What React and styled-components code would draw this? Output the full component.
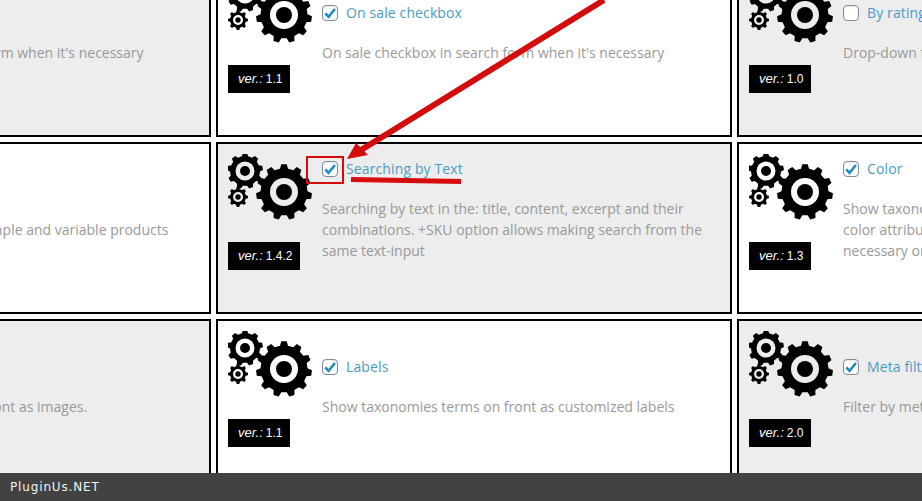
import React from 'react';
import styled, { createGlobalStyle } from 'styled-components';

const GlobalStyle = createGlobalStyle`
  html, body {
    margin: 0;
    height: 100%;
    overflow: hidden;
    background: #fff;
    font-family: "Open Sans", sans-serif;
  }
`;

const Grid = styled.div`
  display: grid;
  grid-template-columns: repeat(3, 516px);
  grid-auto-rows: 172px;
  gap: 5px;
  margin: -35px 0 0 -305px;
  width: 1558px;
`;

const Card = styled.div`
  box-sizing: border-box;
  border: 2px solid #000;
  background: ${props => (props.$active ? '#ededed' : '#fff')};
  padding: 10px;
  display: grid;
  grid-template-columns: 94px 1fr;
  grid-template-rows: 116px;
`;

const Side = styled.div`
  display: flex;
  flex-direction: column;
  align-items: flex-start;
  gap: 22px;
`;

const Version = styled.div`
  background: #000;
  color: #fff;
  font-family: "Liberation Sans", sans-serif;
  font-size: 12px;
  line-height: 28px;
  height: 28px;
  padding: 0 7px 0 10px;
  em {
    font-size: 13px;
    margin-right: 3px;
  }
`;

const Body = styled.div`
  align-self: center;
  padding-bottom: 7px;
`;

const Heading = styled.div`
  display: flex;
  align-items: center;
  gap: 8px;
  height: 24px;
  margin-bottom: 17px;
  font-size: 14px;
  letter-spacing: 0.12px;
  color: #4a9cc2;
`;

const Box = styled.span`
  box-sizing: border-box;
  width: 16px;
  height: 16px;
  border: 1px solid #7e8c9a;
  border-radius: 4px;
  background: #fff;
  display: flex;
  align-items: center;
  justify-content: center;
  box-shadow: inset 0 1px 2px rgba(0, 0, 0, 0.1);
`;

const Text = styled.div`
  font-size: 14px;
  line-height: 21px;
  color: #999;
`;

const Footer = styled.div`
  position: fixed;
  left: 0;
  right: 0;
  bottom: 0;
  height: 28px;
  line-height: 28px;
  padding-left: 10px;
  background: #424242;
  color: #f2f2f2;
  font-family: "DejaVu Sans", sans-serif;
  font-size: 12px;
  letter-spacing: 0.85px;
`;

const Overlay = styled.svg`
  position: fixed;
  left: 0;
  top: 0;
  pointer-events: none;
`;

function gearPath(cx, cy, outer, inner, teeth) {
  let d = '';
  const step = (Math.PI * 2) / teeth;
  for (let i = 0; i < teeth; i++) {
    const a = i * step - Math.PI / 2;
    const pts = [
      [inner, a - step * 0.3],
      [outer, a - step * 0.17],
      [outer, a + step * 0.17],
      [inner, a + step * 0.3],
    ];
    pts.forEach(([r, t], j) => {
      d += `${i === 0 && j === 0 ? 'M' : 'L'}${(cx + r * Math.cos(t)).toFixed(2)} ${(cy + r * Math.sin(t)).toFixed(2)}`;
    });
  }
  return d + 'Z';
}

function Gear({ cx, cy, outer, inner, ring, hole, teeth, bg }) {
  return (
    <g>
      <path d={gearPath(cx, cy, outer, inner, teeth)} fill="#000" />
      <circle cx={cx} cy={cy} r={ring} fill={bg} />
      <circle cx={cx} cy={cy} r={hole} fill="#000" />
    </g>
  );
}

const Gears = ({ bg }) => (
  <svg width="86" height="66" viewBox="0 0 86 66">
    <Gear cx={17} cy={17} outer={18} inner={15} ring={9.5} hole={5} teeth={9} bg={bg} />
    <Gear cx={10} cy={43} outer={10} inner={8} ring={5} hole={2.7} teeth={8} bg={bg} />
    <Gear cx={56} cy={38} outer={28} inner={23.5} ring={14} hole={8} teeth={11} bg={bg} />
  </svg>
);

const Check = () => (
  <svg width="12" height="12" viewBox="0 0 12 12">
    <path d="M1.3 6.3L4.6 9.8L10.9 2" fill="none" stroke="#1e8cbe" strokeWidth="2.6" />
  </svg>
);

const cards = [
  { title: 'Select', text: "Drop-down filters in search form when it's necessary", ver: '1.0', checked: true, active: true },
  { title: 'On sale checkbox', text: "On sale checkbox in search form when it's necessary", ver: '1.1', checked: true },
  { title: 'By rating', text: "Drop-down filter by rating in search form when it's necessary", ver: '1.0', active: true },
  { title: 'Products type', text: 'Filter by the product types: simple and variable products', ver: '1.0', checked: true },
  { title: 'Searching by Text', text: 'Searching by text in the: title, content, excerpt and their combinations. +SKU option allows making search from the same text-input', ver: '1.4.2', checked: true, active: true },
  { title: 'Color', text: 'Show taxonomies terms on front in the search form as nice color attributes with color pickers to filter products when necessary on front of the site', ver: '1.3', checked: true },
  { title: 'Image', text: 'Show taxonomies terms on front as images.', ver: '1.0', checked: true, active: true },
  { title: 'Labels', text: 'Show taxonomies terms on front as customized labels', ver: '1.1', checked: true },
  { title: 'Meta filter', text: 'Filter by meta fields of the products', ver: '2.0', checked: true, active: true },
];

export default function App() {
  return (
    <>
      <GlobalStyle />
      <Grid>
        {cards.map(card => (
          <Card key={card.title} $active={card.active}>
            <Side>
              <Gears bg={card.active ? '#ededed' : '#fff'} />
              <Version><em>ver.:</em>{card.ver}</Version>
            </Side>
            <Body>
              <Heading>
                <Box>{card.checked && <Check />}</Box>
                {card.title}
              </Heading>
              <Text>{card.text}</Text>
            </Body>
          </Card>
        ))}
      </Grid>
      <Overlay width="922" height="501">
        <path d="M604 0L361 150" stroke="#d40c0c" strokeWidth="6" fill="none" />
        <path d="M347 159L368 155L356 143Z" fill="#d40c0c" />
        <rect x="307" y="157" width="36" height="26" fill="none" stroke="#d40c0c" strokeWidth="2" />
        <path d="M351 179.5L461 181.5" stroke="#d40c0c" strokeWidth="5" fill="none" />
      </Overlay>
      <Footer>PluginUs.NET</Footer>
    </>
  );
}
